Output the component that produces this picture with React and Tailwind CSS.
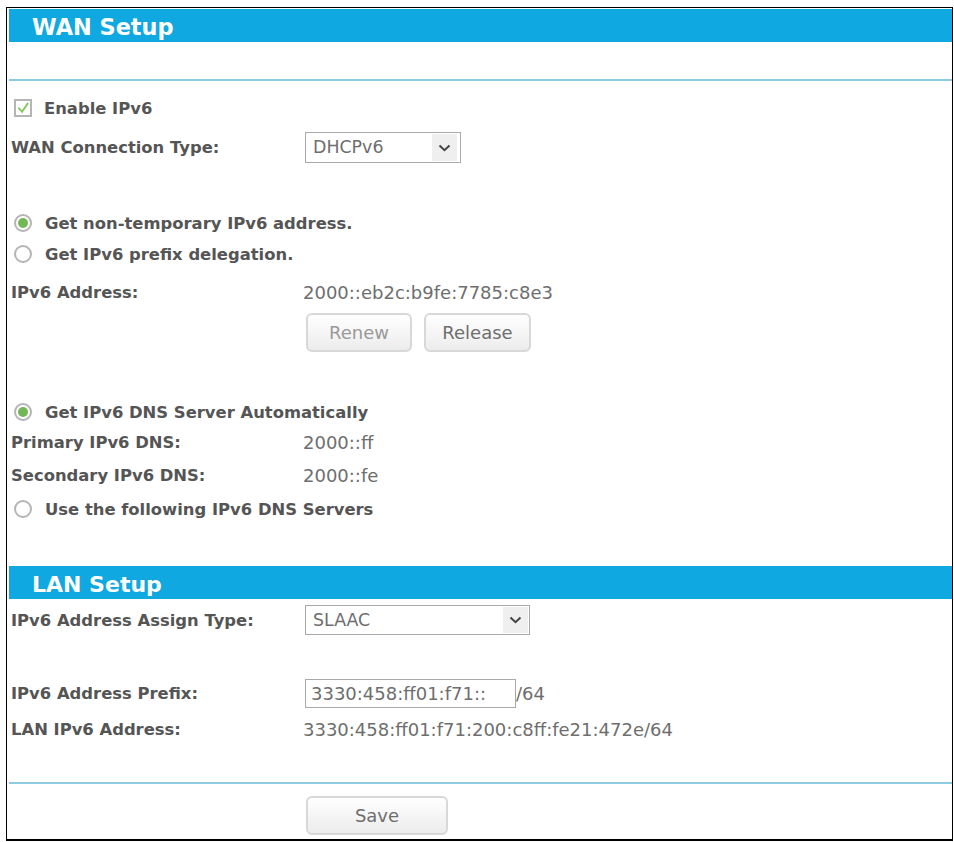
const bold = "font-['DejaVu_Sans','Liberation_Sans',sans-serif] font-bold text-[16.4px] text-[#555555] pt-[2px]";
const val = "font-['DejaVu_Sans','Liberation_Sans',sans-serif] text-[18px] text-[#6e6e6e]";

function Chevron({ gap }) {
  return (
    <span className={`absolute top-0 bottom-0 w-[25px] flex items-center justify-center bg-[#efefef] pointer-events-none ${gap}`}>
      <svg width="13" height="8" viewBox="0 0 13 8" fill="none">
        <path d="M1.5 1.5 L6.5 6.2 L11.5 1.5" stroke="#444" strokeWidth="2" />
      </svg>
    </span>
  );
}

function Select({ value, w, gap, h }) {
  return (
    <div className={`relative ${h} ${w} border border-[#aaaaaa] p-px`}>
      <div className="relative h-full">
        <select
          defaultValue={value}
          className="font-['DejaVu_Sans','Liberation_Sans',sans-serif] text-[17.4px] text-[#6e6e6e] w-full h-full appearance-none pl-[6px] outline-none bg-white"
        >
          <option>{value}</option>
        </select>
        <Chevron gap={gap} />
      </div>
    </div>
  );
}

function Radio({ on }) {
  return (
    <span className="w-[18px] h-[18px] rounded-full border-2 border-[#b5b5b5] flex items-center justify-center shrink-0 bg-white">
      {on && <span className="w-[10px] h-[10px] rounded-full bg-[#74b856]" />}
    </span>
  );
}

function RadioRow({ on, label, mt }) {
  return (
    <div className={`flex items-center h-[28px] pl-[5px] ${mt}`}>
      <Radio on={on} />
      <span className={`${bold} ml-[13px]`}>{label}</span>
    </div>
  );
}

function Row({ label, mt, h = "h-[28px]", children }) {
  return (
    <div className={`flex items-center ${h} ${mt}`}>
      <span className={`${bold} w-[296px] pl-[2px] shrink-0 whitespace-nowrap`}>{label}</span>
      {children}
    </div>
  );
}

function Value({ children }) {
  return <span className={`${val} -ml-[2px]`}>{children}</span>;
}

function Btn({ children, w, disabled }) {
  return (
    <button
      disabled={disabled}
      className={`${w} h-[39px] rounded-[6px] border-2 border-[#d8d8d8] bg-gradient-to-b from-[#ffffff] to-[#ececec] font-['DejaVu_Sans','Liberation_Sans',sans-serif] text-[18px] ${disabled ? "text-[#999999]" : "text-[#6e6e6e]"}`}
    >
      {children}
    </button>
  );
}

function Band({ title, mt, size }) {
  return (
    <div className={`h-[33px] bg-[#10a8e0] flex items-center pl-[23px] pt-[4px] ${mt}`}>
      <h2 className={`font-['DejaVu_Sans','Liberation_Sans',sans-serif] font-bold ${size} text-white`}>{title}</h2>
    </div>
  );
}

function Rule({ mt }) {
  return <div className={`h-[2px] bg-[#8ccbe0] ${mt}`} />;
}

export default function App() {
  return (
    <div className="w-[954px] h-[842px] bg-white pt-[7px] pl-[6px] overflow-hidden">
      <div className="w-[947px] h-[834px] border border-black border-b-2 pl-[2px] pt-px">
        <Band title="WAN Setup" size="text-[22.4px]" />
        <Rule mt="mt-[37px]" />
        <div className="flex items-center h-[28px] mt-[13px] pl-[5px]">
          <span className="w-[18px] h-[18px] border-2 border-[#b5b5b5] flex items-center justify-center shrink-0">
            <svg width="15" height="14" viewBox="0 0 15 14" fill="none">
              <path d="M2.5 6.5 L6.5 11 L13 1.5" stroke="#84c860" strokeWidth="2" />
            </svg>
          </span>
          <span className={`${bold} ml-[12px]`}>Enable IPv6</span>
        </div>
        <Row label="WAN Connection Type:" mt="mt-[10px]" h="h-[31px]">
          <Select value="DHCPv6" w="w-[156px]" gap="right-[2px]" h="h-[31px]" />
        </Row>

        <RadioRow on label="Get non-temporary IPv6 address." mt="mt-[46px]" />
        <RadioRow label="Get IPv6 prefix delegation." mt="mt-[3px]" />
        <Row label="IPv6 Address:" mt="mt-[10px]">
          <Value>2000::eb2c:b9fe:7785:c8e3</Value>
        </Row>
        <div className="flex gap-[12px] h-[39px] mt-[7px] pl-[297px]">
          <Btn w="w-[106px]" disabled>Renew</Btn>
          <Btn w="w-[107px]">Release</Btn>
        </div>

        <RadioRow on label="Get IPv6 DNS Server Automatically" mt="mt-[46px]" />
        <Row label="Primary IPv6 DNS:" mt="mt-[2px]">
          <Value>2000::ff</Value>
        </Row>
        <Row label="Secondary IPv6 DNS:" mt="mt-[5px]">
          <Value>2000::fe</Value>
        </Row>
        <RadioRow label="Use the following IPv6 DNS Servers" mt="mt-[6px]" />

        <Band title="LAN Setup" mt="mt-[43px]" size="text-[22px]" />
        <Row label="IPv6 Address Assign Type:" mt="mt-[6px]" h="h-[30px]">
          <Select value="SLAAC" w="w-[225px]" gap="right-0" h="h-[30px]" />
        </Row>
        <Row label="IPv6 Address Prefix:" mt="mt-[44px]" h="h-[29px]">
          <input
            readOnly
            value="3330:458:ff01:f71::"
            className={`${val} w-[211px] h-[29px] border border-[#aaaaaa] pl-[5px] outline-none`}
          />
          <span className={val}>/64</span>
        </Row>
        <Row label="LAN IPv6 Address:" mt="mt-[7px]">
          <Value>3330:458:ff01:f71:200:c8ff:fe21:472e/64</Value>
        </Row>
        <Rule mt="mt-[39px]" />
        <div className="flex mt-[12px] pl-[297px]">
          <Btn w="w-[142px]">Save</Btn>
        </div>
      </div>
    </div>
  );
}
